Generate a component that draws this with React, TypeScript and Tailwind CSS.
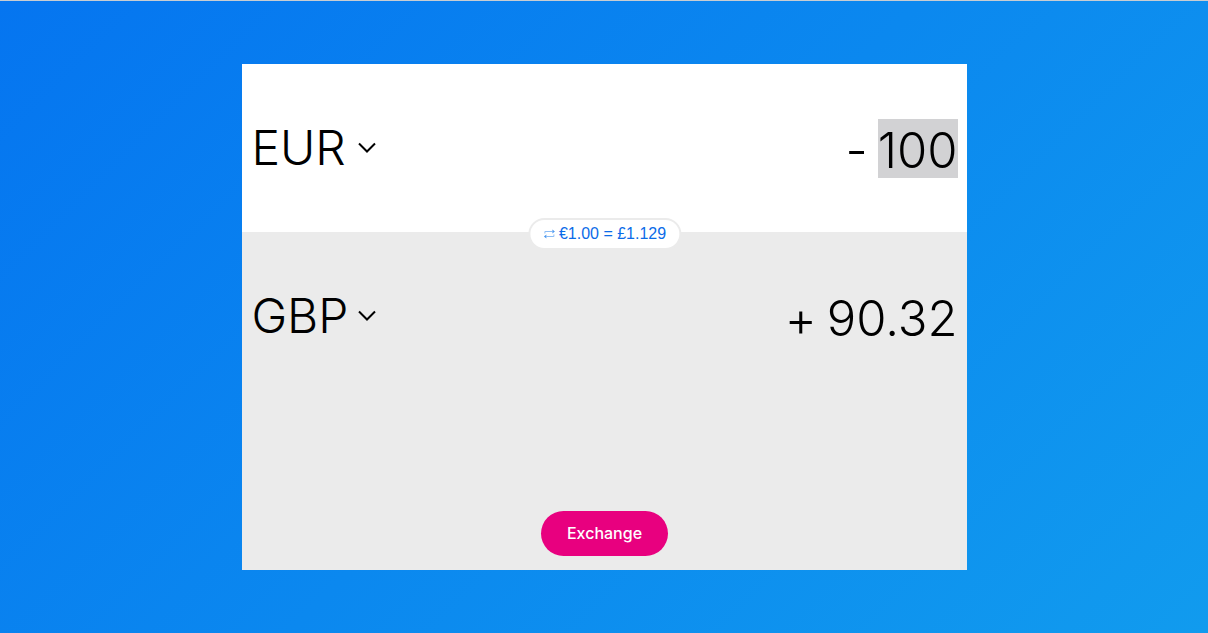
import { useState } from "react";

const currencies = ["EUR", "GBP", "USD"];

function CurrencySelect({ label, initial }: { label: string; initial: string }) {
  const [value, setValue] = useState(initial);
  return (
    <div className="grid w-[125px] shrink-0 items-center">
      <select
        aria-label={label}
        value={value}
        onChange={(e) => setValue(e.target.value)}
        className="col-start-1 row-start-1 h-[60px] w-full appearance-none bg-transparent text-5xl leading-[60px] font-light outline-none"
      >
        {currencies.map((c) => (
          <option key={c}>{c}</option>
        ))}
      </select>
      <svg
        aria-hidden="true"
        viewBox="0 0 18 12"
        className="pointer-events-none col-start-1 row-start-1 h-3 w-[18px] justify-self-end"
        fill="none"
        stroke="#000"
        strokeWidth="2"
      >
        <path d="M1 1.5 9 9.5 17 1.5" />
      </svg>
    </div>
  );
}

function Amount({
  label,
  sign,
  initial,
  highlighted = false,
}: {
  label: string;
  sign: string;
  initial: string;
  highlighted?: boolean;
}) {
  const [value, setValue] = useState(initial);
  return (
    <div className="flex items-center gap-2.5 pt-0.5 text-[49px] leading-[59px] font-light">
      <span className="pt-1">{sign}</span>
      <input
        aria-label={label}
        value={value}
        onChange={(e) => setValue(e.target.value)}
        className={`h-[59px] [field-sizing:content] pt-1 text-right outline-none ${
          highlighted ? "bg-[#d2d2d4]" : "bg-transparent"
        }`}
      />
    </div>
  );
}

export default function App() {
  return (
    <main className="flex min-h-screen items-center justify-center border-t border-[#c8cdd2] bg-linear-135/srgb from-[#0575f0] to-[#119bee] pl-px font-['Inter',sans-serif] text-black">
      <div className="flex min-h-[80vh] w-3/5 flex-col bg-[#ebebeb]">
        <section className="relative flex h-[168px] items-center justify-between bg-white px-[9px]">
          <CurrencySelect label="From currency" initial="EUR" />
          <Amount label="Amount to sell" sign="-" initial="100" highlighted />
          <button
            type="button"
            className="absolute -bottom-[18px] left-1/2 flex h-8 -translate-x-1/2 items-center gap-1 rounded-full border-2 border-[#ebebeb] bg-white px-[13px] font-['Liberation_Sans',sans-serif] text-base whitespace-nowrap text-[#0b6be8]"
          >
            <svg
              aria-hidden="true"
              viewBox="0 0 12 12"
              className="size-3"
              fill="none"
              stroke="#8dbdf5"
              strokeWidth="1"
            >
              <path d="M1.5 5.5v-2H9M10.5 6.5v2H3" />
              <path d="M9 1.5 11.5 3.5 9 5.5zM3 6.5.5 8.5 3 10.5z" fill="#4f9af0" stroke="none" />
            </svg>
            €1.00 = £1.129
          </button>
        </section>
        <section className="flex h-[168px] items-center justify-between px-[9px]">
          <CurrencySelect label="To currency" initial="GBP" />
          <Amount label="Amount to buy" sign="+" initial="90.32" />
        </section>
        <div className="mt-auto flex justify-center pb-[14px]">
          <button
            type="button"
            className="h-[45px] rounded-full bg-[#e8007f] px-[26px] pb-0.5 text-base font-medium text-white"
          >
            Exchange
          </button>
        </div>
      </div>
    </main>
  );
}
